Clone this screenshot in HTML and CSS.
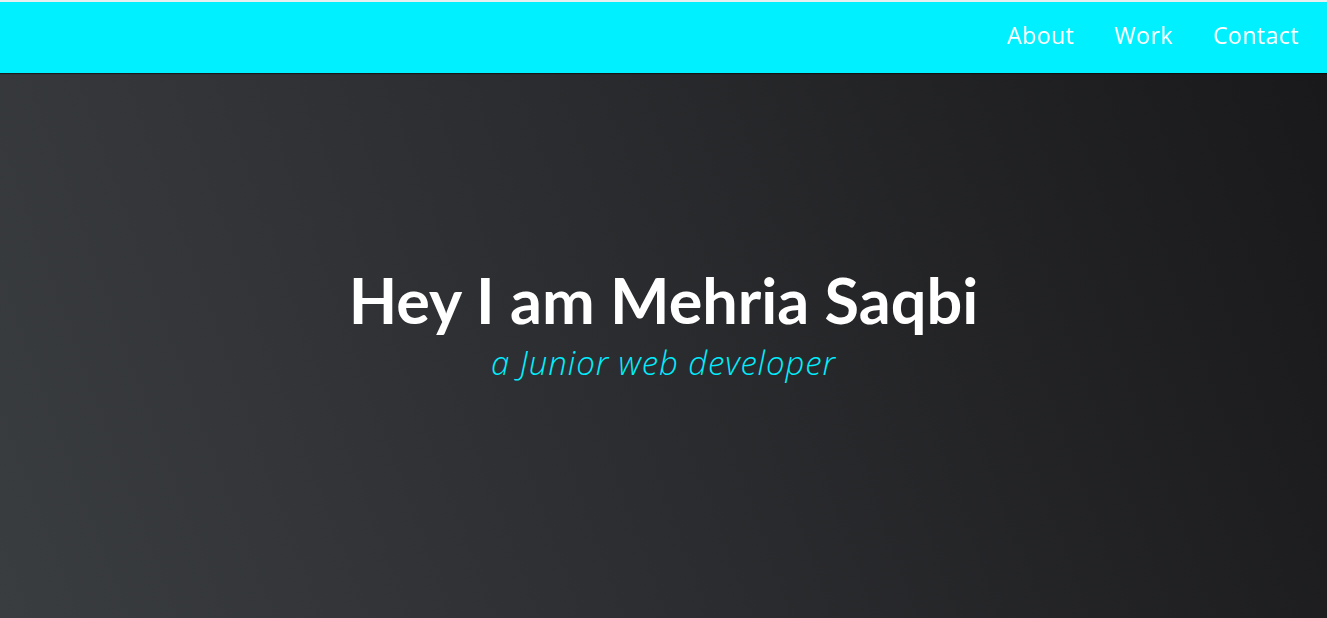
FILE: index.html
```html
<!DOCTYPE html>
<html lang="en">
<head>
<meta charset="utf-8">
<title>Mehria Saqbi</title>
<link rel="stylesheet" href="styles.css">
</head>
<body>
<header class="nav">
  <ul class="nav-list">
    <li><a href="#about">About</a></li>
    <li><a href="#work">Work</a></li>
    <li><a href="#contact">Contact</a></li>
  </ul>
</header>
<section class="hero">
  <h1 class="hero-title">Hey I am Mehria Saqbi</h1>
  <p class="hero-sub">a Junior web developer</p>
</section>
</body>
</html>
```
FILE: styles.css
```css
* { box-sizing: border-box; }
html, body { margin: 0; padding: 0; height: 100%; }
body {
  background: #1c1c1e;
  border-top: 2px solid #e6eef0;
  overflow: hidden;
}
.nav {
  height: 71px;
  background: #00f0ff;
  display: flex;
  justify-content: flex-end;
  align-items: center;
  padding-right: 28px;
  padding-bottom: 5px;
  box-shadow: 0 1px 1px rgba(0,0,0,0.5);
  position: relative;
  z-index: 1;
}
.nav-list {
  list-style: none;
  margin: 0;
  padding: 0;
  display: flex;
  gap: 40px;
}
.nav-list a {
  color: #ffffff;
  text-decoration: none;
  font-family: "Open Sans", "Noto Sans", sans-serif;
  font-size: 23px;
  letter-spacing: 0.5px;
}
.hero {
  height: 545px;
  background: linear-gradient(70deg, #3a3d40 0%, #2c2d30 45%, #19191b 100%);
  display: flex;
  flex-direction: column;
  align-items: center;
  padding-top: 187px;
}
.hero-title {
  margin: 0;
  color: #ffffff;
  font-family: Lato, "Open Sans", sans-serif;
  font-weight: 700;
  font-size: 63px;
  line-height: 80px;
}
.hero-sub {
  margin: 3px 0 0;
  color: #00eeff;
  font-family: "Open Sans", "Noto Sans", sans-serif;
  font-weight: 300;
  font-style: italic;
  font-size: 33px;
  letter-spacing: 0.9px;
  line-height: 40px;
}
```
